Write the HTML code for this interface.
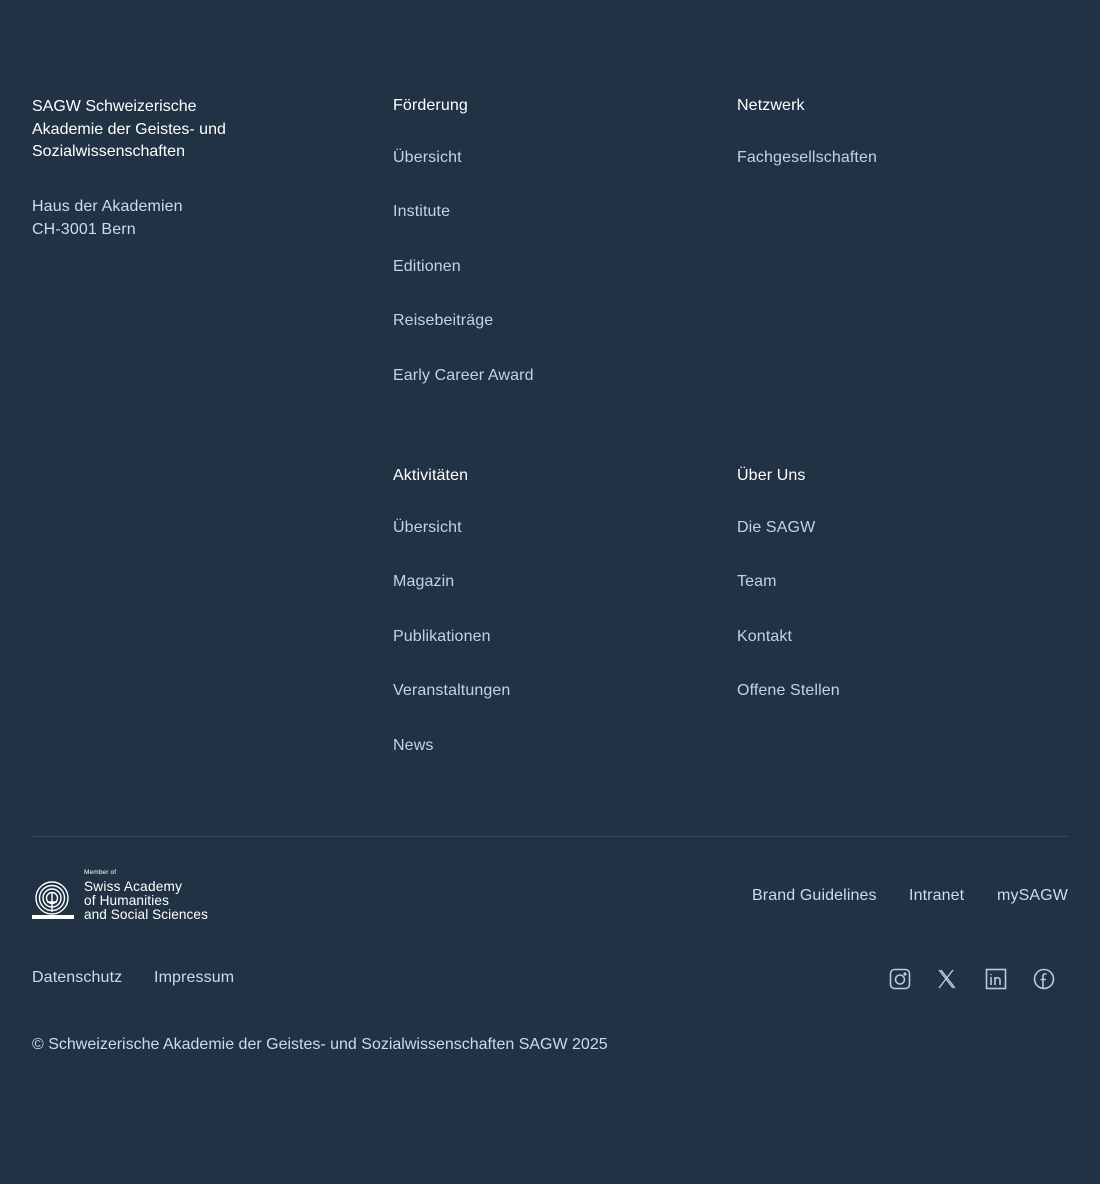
<!DOCTYPE html>
<html><head><meta charset="utf-8"><style>
html,body{margin:0;padding:0}
body{width:1100px;height:1184px;background:#203243;font-family:"Liberation Sans",sans-serif;font-size:16px;position:relative;overflow:hidden;letter-spacing:0.12px}
.a{position:absolute;white-space:nowrap;line-height:20px}
.w{color:#ffffff}
.l{color:#c3d3e3}
.b{color:#c5def2}
</style></head><body>
<div class="a w" style="left:32px;top:96px;line-height:22.5px;letter-spacing:0">SAGW Schweizerische<br>Akademie der Geistes- und<br>Sozialwissenschaften</div>
<div class="a b" style="left:32px;top:195px;line-height:23px">Haus der Akademien<br>CH-3001 Bern</div>

<div class="a w" style="left:393px;top:96px">Förderung</div>
<div class="a l" style="left:393px;top:148px">Übersicht</div>
<div class="a l" style="left:393px;top:202px">Institute</div>
<div class="a l" style="left:393px;top:257px">Editionen</div>
<div class="a l" style="left:393px;top:311px">Reisebeiträge</div>
<div class="a l" style="left:393px;top:366px">Early Career Award</div>

<div class="a w" style="left:737px;top:96px">Netzwerk</div>
<div class="a l" style="left:737px;top:148px">Fachgesellschaften</div>

<div class="a w" style="left:393px;top:466px">Aktivitäten</div>
<div class="a l" style="left:393px;top:518px">Übersicht</div>
<div class="a l" style="left:393px;top:572px">Magazin</div>
<div class="a l" style="left:393px;top:627px">Publikationen</div>
<div class="a l" style="left:393px;top:681px">Veranstaltungen</div>
<div class="a l" style="left:393px;top:736px">News</div>

<div class="a w" style="left:737px;top:466px">Über Uns</div>
<div class="a l" style="left:737px;top:518px">Die SAGW</div>
<div class="a l" style="left:737px;top:572px">Team</div>
<div class="a l" style="left:737px;top:627px">Kontakt</div>
<div class="a l" style="left:737px;top:681px">Offene Stellen</div>

<div style="position:absolute;left:32px;top:836px;width:1036px;height:1px;background:#2c4a66"></div>

<svg style="position:absolute;left:32px;top:866px" width="190" height="56" viewBox="0 0 190 56">
 <g fill="none" stroke="#fff" stroke-width="1.4">
  <circle cx="20" cy="32" r="16"/><circle cx="20" cy="32" r="12.5"/><circle cx="20" cy="32" r="9"/><circle cx="20" cy="32" r="5.5"/>
  <line x1="20" y1="26" x2="20" y2="46"/><line x1="15" y1="36" x2="25" y2="36"/>
 </g>
 <rect x="0" y="49" width="42" height="4" fill="#fff"/>
 <text x="52" y="8" fill="#fff" font-size="6.5" font-family="Liberation Sans,sans-serif">Member of</text>
 <text x="52" y="25" fill="#fff" font-size="13.6" font-family="Liberation Sans,sans-serif" textLength="98">Swiss Academy</text>
 <text x="52" y="39" fill="#fff" font-size="13.6" font-family="Liberation Sans,sans-serif" textLength="85">of Humanities</text>
 <text x="52" y="53" fill="#fff" font-size="13.6" font-family="Liberation Sans,sans-serif" textLength="124">and Social Sciences</text>
</svg>

<div class="a b" style="left:752px;top:886px">Brand Guidelines</div>
<div class="a b" style="left:909px;top:886px">Intranet</div>
<div class="a b" style="left:997px;top:886px">mySAGW</div>

<div class="a b" style="left:32px;top:968px">Datenschutz</div>
<div class="a b" style="left:154px;top:968px">Impressum</div>

<svg style="position:absolute;left:888px;top:967px" width="180" height="24" viewBox="0 0 180 24" fill="none" stroke="#b9cadb" stroke-width="1.6">
 <rect x="2.5" y="2.5" width="19" height="19" rx="4"/><circle cx="12" cy="12.5" r="4.5"/><circle cx="17" cy="7" r="0.8" fill="#b9cadb"/>
 <path d="M51 3 L65 21 M51 21 L65 3 M53 3 L67 21" stroke-width="1.4"/>
 <rect x="98.5" y="2.5" width="19" height="19"/><path d="M103 10v8M103 7v1M107 18v-8M107 13c0-3 5-3 5 0v5"/>
 <circle cx="156" cy="12" r="9.5"/><path d="M158.5 7h-1.5c-1.5 0-2 1-2 2v12M152.5 12.5h5.5"/>
</svg>

<div class="a b" style="left:32px;top:1035px;letter-spacing:0">© Schweizerische Akademie der Geistes- und Sozialwissenschaften SAGW 2025</div>
</body></html>
